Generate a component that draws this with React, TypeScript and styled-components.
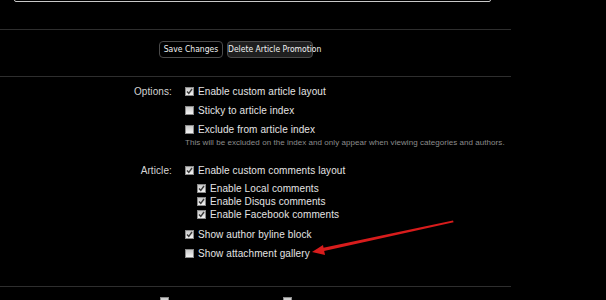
import React from "react";
import styled, { createGlobalStyle } from "styled-components";

const Global = createGlobalStyle`
  html, body { margin: 0; padding: 0; background: #000; }
  body { font-family: "Liberation Sans", Arial, sans-serif; color: #e2e2e2; overflow: hidden; }
`;

const Page = styled.div`
  position: relative;
  width: 606px;
  height: 300px;
  overflow: hidden;
  background: #000;
`;

const TopInput = styled.div`
  margin-top: -20px;
  margin-left: 14px;
  width: 475px;
  height: 20px;
  border: 1px solid #c8c8c8;
  border-radius: 2px;
  background: #000;
`;

const Divider = styled.div<{ $top: number }>`
  margin-top: ${(p) => p.$top}px;
  width: 511px;
  height: 1px;
  background: #2e2e2e;
`;

const ButtonBar = styled.div`
  display: flex;
  gap: 4px;
  padding: 11px 0 0 159px;
  height: 17px;
`;

const Button = styled.button<{ $dark?: boolean; $w: number }>`
  box-sizing: border-box;
  width: ${(p) => p.$w}px;
  height: 17px;
  padding: 0;
  border: 1px solid #4a4a4a;
  border-radius: 4px;
  background: ${(p) => (p.$dark ? "#1f1f1f" : "#000")};
  color: #f2f2f2;
  font-family: "Liberation Sans Narrow", "DejaVu Sans Condensed", "Liberation Sans", Arial, sans-serif;
  font-stretch: condensed;
  font-size: 8.5px;
  line-height: 15px;
  white-space: nowrap;
`;

const Form = styled.div`
  display: grid;
  grid-template-columns: 172px 1fr;
  column-gap: 13px;
  padding-top: 5px;
`;

const Label = styled.div<{ $mt?: number }>`
  margin-top: ${(p) => p.$mt ?? 0}px;
  text-align: right;
  font-size: 10px;
  line-height: 19px;
  color: #d4d4d4;
  letter-spacing: 0.1px;
`;

const Controls = styled.div<{ $mt?: number }>`
  margin-top: ${(p) => p.$mt ?? 0}px;
  display: flex;
  flex-direction: column;
`;

const Row = styled.label<{ $h?: number }>`
  display: flex;
  align-items: center;
  gap: 4px;
  height: ${(p) => p.$h ?? 19}px;
  font-size: 10px;
  color: #e4e4e4;
  letter-spacing: 0.1px;
  white-space: nowrap;
`;

const SubList = styled.div`
  display: flex;
  flex-direction: column;
  padding: 2px 0 0 12px;
  margin-bottom: 4px;
`;

const Hint = styled.div`
  font-size: 8px;
  line-height: 10px;
  letter-spacing: 0.05px;
  color: #8c8c8c;
  margin-top: -1px;
  white-space: nowrap;
`;

const Box = styled.span`
  position: relative;
  flex: none;
  box-sizing: border-box;
  width: 9px;
  height: 9px;
  border: 1px solid #8a8a8a;
  background: linear-gradient(#c9c9c9, #f4f4f4);
`;

const BottomRow = styled.div`
  display: flex;
  gap: 114px;
  padding: 10px 0 0 160px;
`;

const Arrow = styled.svg`
  position: absolute;
  left: 0;
  top: 0;
  pointer-events: none;
`;

const Check = () => (
  <svg width="7" height="7" viewBox="0 0 7 7" style={{ position: "absolute", left: 0, top: 0 }}>
    <path d="M1 3.4 L2.8 5.3 L6 1" stroke="#3a3a3a" strokeWidth="1.4" fill="none" />
  </svg>
);

const CheckBox = ({ checked }: { checked?: boolean }) => <Box>{checked && <Check />}</Box>;

export default function App() {
  return (
    <Page>
      <Global />
      <TopInput />
      <Divider $top={27} />
      <ButtonBar>
        <Button $w={64}>Save Changes</Button>
        <Button $w={86} $dark>
          Delete Article Promotion
        </Button>
      </ButtonBar>
      <Divider $top={18} />
      <Form>
        <Label>Options:</Label>
        <Controls>
          <Row>
            <CheckBox checked />
            Enable custom article layout
          </Row>
          <Row>
            <CheckBox />
            Sticky to article index
          </Row>
          <Row>
            <CheckBox />
            Exclude from article index
          </Row>
          <Hint>This will be excluded on the index and only appear when viewing categories and authors.</Hint>
        </Controls>
        <Label $mt={13}>Article:</Label>
        <Controls $mt={13}>
          <Row>
            <CheckBox checked />
            Enable custom comments layout
          </Row>
          <SubList>
            <Row $h={13}>
              <CheckBox checked />
              Enable Local comments
            </Row>
            <Row $h={13}>
              <CheckBox checked />
              Enable Disqus comments
            </Row>
            <Row $h={13}>
              <CheckBox checked />
              Enable Facebook comments
            </Row>
          </SubList>
          <Row>
            <CheckBox checked />
            Show author byline block
          </Row>
          <Row>
            <CheckBox />
            Show attachment gallery
          </Row>
        </Controls>
      </Form>
      <Divider $top={23} />
      <BottomRow>
        <CheckBox />
        <CheckBox />
      </BottomRow>
      <Arrow width="606" height="300" viewBox="0 0 606 300">
        <path d="M453 220.5 L321 248.2 L321.8 251.6 L453.6 222.2 Z" fill="#d81c1c" />
        <path d="M312 252 L323 245 L325 255 Z" fill="#d81c1c" />
      </Arrow>
    </Page>
  );
}
